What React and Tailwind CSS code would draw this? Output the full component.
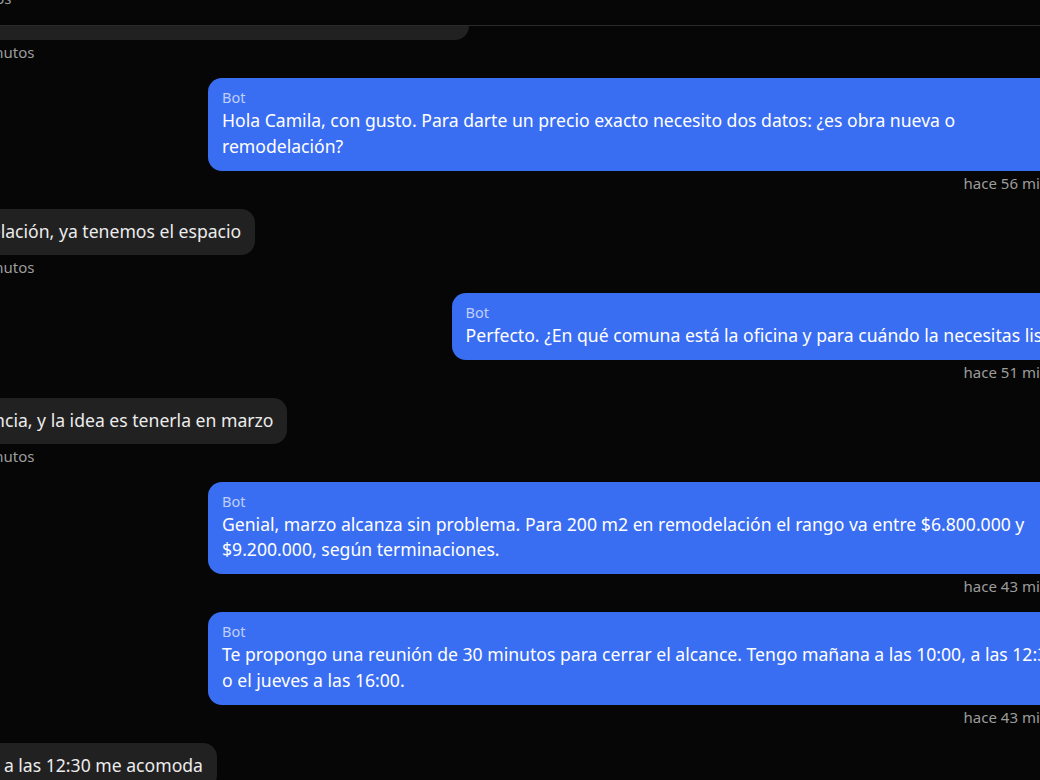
const MESSAGES = [
  { from: 'user', text: 'Hola, quisiera cotizar la remodelación de una oficina de 200 m2', time: 'hace 58 minutos' },
  { from: 'bot', text: 'Hola Camila, con gusto. Para darte un precio exacto necesito dos datos: ¿es obra nueva o remodelación?', time: 'hace 56 minutos' },
  { from: 'user', text: 'Remodelación, ya tenemos el espacio', time: 'hace 54 minutos' },
  { from: 'bot', text: 'Perfecto. ¿En qué comuna está la oficina y para cuándo la necesitas lista?', time: 'hace 51 minutos' },
  { from: 'user', text: 'Providencia, y la idea es tenerla en marzo', time: 'hace 48 minutos' },
  { from: 'bot', text: 'Genial, marzo alcanza sin problema. Para 200 m2 en remodelación el rango va entre $6.800.000 y $9.200.000, según terminaciones.', time: 'hace 43 minutos' },
  { from: 'bot', text: 'Te propongo una reunión de 30 minutos para cerrar el alcance. Tengo mañana a las 10:00, a las 12:30 o el jueves a las 16:00.', time: 'hace 43 minutos' },
  { from: 'user', text: 'Mañana a las 12:30 me acomoda', time: 'hace 40 minutos' },
]

function Message({ from, text, time }) {
  const isBot = from === 'bot'
  return (
    <div className={isBot ? 'flex flex-col items-end' : 'flex flex-col items-start'}>
      {isBot ? (
        <div className="max-w-[872px] rounded-[14px] bg-[#3a6ef2] px-[14px] pt-[9px] pb-[11.5px]">
          <div className="text-[14.5px] leading-[21px] text-[#bfd0fb]">Bot</div>
          <p className="text-[17.6px] leading-[25.5px] text-white">{text}</p>
        </div>
      ) : (
        <div className="max-w-[872px] rounded-[14px] bg-[#212121] px-[14px] pt-[10px] pb-[11px]">
          <p className="text-[17.6px] leading-[25px] text-[#ececec]">{text}</p>
        </div>
      )}
      <span className="mt-[2px] text-[15px] leading-[20px] text-[#9c9c9c]">{time}</span>
    </div>
  )
}

export default function App() {
  const [first, ...rest] = MESSAGES
  return (
    <div className="w-[1040px] h-[780px] overflow-hidden bg-[#060606] flex flex-col" style={{ fontFamily: '"Noto Sans", "Open Sans", sans-serif' }}>
      <header className="h-[26px] shrink-0 overflow-hidden border-b border-[#2a2a2a]">
        <div className="-mt-[12px] -ml-[105px] text-[15px] leading-[20px] text-[#9c9c9c]">hace 59 minutos</div>
      </header>

      <div className="flex-1 overflow-hidden">
        <div className="-ml-[82px] w-[1162px] flex flex-col gap-[16px]">
          <div className="-mt-[32px]">
            <Message {...first} />
          </div>
          {rest.map((m, i) => (
            <Message key={i} {...m} />
          ))}
        </div>
      </div>
    </div>
  )
}
